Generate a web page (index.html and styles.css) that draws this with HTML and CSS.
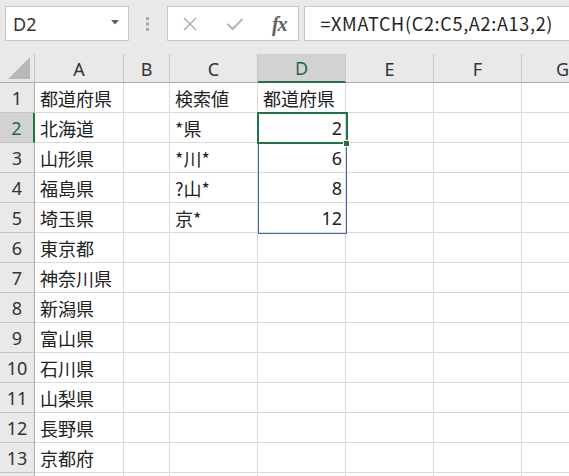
FILE: index.html
```html
<!DOCTYPE html>
<html lang="ja">
<head>
<meta charset="utf-8">
<link rel="stylesheet" href="styles.css">
</head>
<body>
<div class="toolbar">
  <div class="namebox">
    <span class="name">D2</span>
    <svg class="caret" width="8" height="5" viewBox="0 0 8 5"><path d="M0 0 L8 0 L4 4.5 Z" fill="#5f5f5f"/></svg>
  </div>
  <div class="grip">
    <svg width="3" height="14" viewBox="0 0 3 14"><rect x="0" y="0" width="3" height="3" fill="#a8a8a8"/><rect x="0" y="5.5" width="3" height="3" fill="#a8a8a8"/><rect x="0" y="11" width="3" height="3" fill="#a8a8a8"/></svg>
  </div>
  <div class="fxgroup">
    <svg class="ic" width="16" height="16" viewBox="0 0 16 16"><path d="M2 2 L14 14 M14 2 L2 14" stroke="#b3b3b3" stroke-width="1.6" fill="none"/></svg>
    <svg class="ic" width="18" height="14" viewBox="0 0 18 14"><path d="M1.5 7 L6.5 12 L16.5 2" stroke="#b3b3b3" stroke-width="2" fill="none"/></svg>
    <span class="fx">fx</span>
  </div>
  <div class="formula">=XMATCH(C2:C5,A2:A13,2)</div>
</div>
<div class="sheet">
  <div class="grid">
    <div class="hd corner"><svg width="22" height="22" viewBox="0 0 22 22"><path d="M22 0 L22 22 L0 22 Z" fill="#b8b8b8"/></svg></div>
    <div class="hd col">A</div>
    <div class="hd col">B</div>
    <div class="hd col">C</div>
    <div class="hd col sel">D</div>
    <div class="hd col">E</div>
    <div class="hd col">F</div>
    <div class="hd col last">G</div>

    <div class="hd row">1</div><div class="c">都道府県</div><div class="c"></div><div class="c">検索値</div><div class="c">都道府県</div><div class="c"></div><div class="c"></div><div class="c"></div>
    <div class="hd row sel">2</div><div class="c">北海道</div><div class="c"></div><div class="c">*県</div><div class="c num">2</div><div class="c"></div><div class="c"></div><div class="c"></div>
    <div class="hd row">3</div><div class="c">山形県</div><div class="c"></div><div class="c">*川*</div><div class="c num">6</div><div class="c"></div><div class="c"></div><div class="c"></div>
    <div class="hd row">4</div><div class="c">福島県</div><div class="c"></div><div class="c">?山*</div><div class="c num">8</div><div class="c"></div><div class="c"></div><div class="c"></div>
    <div class="hd row">5</div><div class="c">埼玉県</div><div class="c"></div><div class="c">京*</div><div class="c num">12</div><div class="c"></div><div class="c"></div><div class="c"></div>
    <div class="hd row">6</div><div class="c">東京都</div><div class="c"></div><div class="c"></div><div class="c"></div><div class="c"></div><div class="c"></div><div class="c"></div>
    <div class="hd row">7</div><div class="c">神奈川県</div><div class="c"></div><div class="c"></div><div class="c"></div><div class="c"></div><div class="c"></div><div class="c"></div>
    <div class="hd row">8</div><div class="c">新潟県</div><div class="c"></div><div class="c"></div><div class="c"></div><div class="c"></div><div class="c"></div><div class="c"></div>
    <div class="hd row">9</div><div class="c">富山県</div><div class="c"></div><div class="c"></div><div class="c"></div><div class="c"></div><div class="c"></div><div class="c"></div>
    <div class="hd row">10</div><div class="c">石川県</div><div class="c"></div><div class="c"></div><div class="c"></div><div class="c"></div><div class="c"></div><div class="c"></div>
    <div class="hd row">11</div><div class="c">山梨県</div><div class="c"></div><div class="c"></div><div class="c"></div><div class="c"></div><div class="c"></div><div class="c"></div>
    <div class="hd row">12</div><div class="c">長野県</div><div class="c"></div><div class="c"></div><div class="c"></div><div class="c"></div><div class="c"></div><div class="c"></div>
    <div class="hd row">13</div><div class="c">京都府</div><div class="c"></div><div class="c"></div><div class="c"></div><div class="c"></div><div class="c"></div><div class="c"></div>
    <div class="hd row"></div><div class="c"></div><div class="c"></div><div class="c"></div><div class="c"></div><div class="c"></div><div class="c"></div><div class="c"></div>
  </div>
  <div class="range"></div>
  <div class="active"></div>
  <div class="handle"></div>
</div>
</body>
</html>
```

FILE: styles.css
```css
* { box-sizing: border-box; }
html, body {
  margin: 0;
  padding: 0;
  width: 569px;
  height: 476px;
  overflow: hidden;
  background: #e9e9e9;
  font-family: "Noto Sans CJK JP", "Noto Sans", sans-serif;
  color: #222;
}
.toolbar {
  height: 54px;
  display: flex;
  align-items: flex-start;
  padding: 6px 0 0 5px;
  background: #e9e9e9;
}
.namebox {
  width: 126px;
  height: 35px;
  background: #fff;
  border: 1px solid #c8c8c8;
  display: flex;
  align-items: center;
  justify-content: space-between;
  padding: 0 9px 0 7px;
}
.name {
  font-size: 18px;
  line-height: 1;
  color: #333;
  font-family: "Noto Sans", sans-serif;
}
.caret { margin-top: -2px; }
.grip {
  width: 39px;
  height: 35px;
  display: flex;
  align-items: center;
  justify-content: center;
}
.fxgroup {
  width: 135px;
  height: 35px;
  background: #fff;
  border: 1px solid #c8c8c8;
  display: flex;
  align-items: center;
  padding: 0 0 0 14px;
}
.fxgroup .ic:first-child { margin-right: 28px; }
.fxgroup .ic:nth-child(2) { margin-right: 28px; }
.fx {
  font-family: "Liberation Serif", "DejaVu Serif", serif;
  font-style: italic;
  font-weight: bold;
  font-size: 20px;
  color: #606060;
  letter-spacing: -1px;
  line-height: 1;
}
.formula {
  margin-left: 5px;
  width: 270px;
  height: 35px;
  background: #fff;
  border: 1px solid #c8c8c8;
  border-right: none;
  font-size: 18px;
  line-height: 33px;
  padding-left: 15px;
  letter-spacing: 0.7px;
  color: #222;
  white-space: nowrap;
  font-family: "Noto Sans CJK JP", sans-serif;
}
.sheet {
  position: relative;
  background: #fff;
}
.grid {
  display: grid;
  grid-template-columns: 35px 89px 46px 88px 88px 88px 88px 60px;
  grid-template-rows: 29px repeat(14, 30px);
}
.hd {
  background: #e9e9e9;
  color: #333;
  font-size: 18px;
  display: flex;
  align-items: center;
  justify-content: center;
  line-height: 1;
}
.col {
  border-right: 1px solid #c6c6c6;
  border-bottom: 1px solid #ababab;
  font-family: "Noto Sans", sans-serif;
  padding-top: 1px;
}
.col.last { border-right: none; justify-content: flex-start; padding-left: 34px; }
.corner {
  border-right: 1px solid #c6c6c6;
  border-bottom: 1px solid #ababab;
  justify-content: flex-end;
  align-items: flex-end;
  padding: 0 4px 3px 0;
}
.row {
  border-right: 1px solid #ababab;
  border-bottom: 1px solid #c6c6c6;
  font-family: "Noto Sans", sans-serif;
}
.col.sel {
  background: #d2d2d2;
  color: #1e6b41;
  border-bottom: 2px solid #217346;
}
.row.sel {
  background: #d2d2d2;
  color: #1e6b41;
  border-right: 2px solid #217346;
}
.c {
  border-right: 1px solid #dadada;
  border-bottom: 1px solid #dadada;
  font-size: 18px;
  line-height: 1;
  display: flex;
  align-items: center;
  padding-left: 5px;
  white-space: nowrap;
  overflow: hidden;
  color: #222;
}
.c.num {
  justify-content: flex-end;
  padding-left: 0;
  padding-right: 3px;
  font-family: "Noto Sans", sans-serif;
}
.range {
  position: absolute;
  left: 258px;
  top: 89px;
  width: 89px;
  height: 91px;
  border: 1px solid #3f66b5;
}
.active {
  position: absolute;
  left: 257px;
  top: 58px;
  width: 91px;
  height: 32px;
  border: 2px solid #217346;
}
.handle {
  position: absolute;
  left: 343px;
  top: 86px;
  width: 7px;
  height: 7px;
  background: #217346;
  border: 1px solid #fff;
}
```
